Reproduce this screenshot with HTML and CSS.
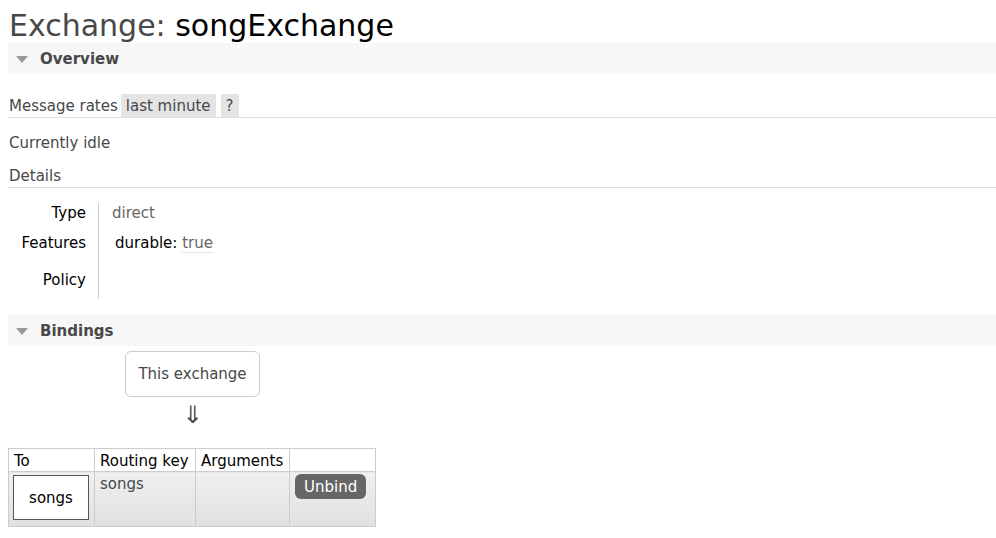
FILE: index.html
```html
<!DOCTYPE html>
<html>
<head>
<meta charset="utf-8">
<link rel="stylesheet" href="styles.css">
</head>
<body>
<h1 class="title">Exchange: <b class="name">songExchange</b></h1>

<div class="section">
  <h2 class="section-head"><span class="tri"></span>Overview</h2>
  <div class="rates">
    <span class="rates-label">Message rates</span>
    <span class="chip">last minute</span>
    <span class="chip help">?</span>
  </div>
  <p class="idle">Currently idle</p>
  <div class="subhead">Details</div>
  <div class="details">
    <div class="dl-key row1">Type</div>
    <div class="dl-val row1"><span class="grey">direct</span></div>
    <div class="dl-key row2">Features</div>
    <div class="dl-val row2 feat">durable: <abbr class="grey dotted">true</abbr></div>
    <div class="dl-key row3">Policy</div>
    <div class="dl-val row3"></div>
  </div>
</div>

<div class="section">
  <h2 class="section-head"><span class="tri"></span>Bindings</h2>
  <div class="flow">
    <div class="this-ex">This exchange</div>
    <div class="arrow">&#8659;</div>
  </div>
  <table class="bindings">
    <thead>
      <tr><th class="c1">To</th><th class="c2">Routing key</th><th class="c3">Arguments</th><th class="c4"></th></tr>
    </thead>
    <tbody>
      <tr>
        <td class="c1"><div class="queue">songs</div></td>
        <td class="c2 key">songs</td>
        <td class="c3"></td>
        <td class="c4"><span class="btn">Unbind</span></td>
      </tr>
    </tbody>
  </table>
</div>
</body>
</html>
```

FILE: styles.css
```css
html, body {
  margin: 0;
  padding: 0;
  background: #fff;
}
body {
  padding: 8px 0 0 8px;
  font-family: "DejaVu Sans", Verdana, sans-serif;
  font-size: 15px;
  color: #484848;
}
.title {
  margin: 0;
  font-size: 30px;
  font-weight: normal;
  line-height: 35px;
  color: #484848;
  padding-left: 1px;
}
.title .name {
  font-weight: normal;
  color: #000;
}
.section-head {
  margin: 0;
  height: 31px;
  background: #f7f7f7;
  display: flex;
  align-items: center;
  font-size: 15px;
  font-weight: bold;
  color: #484848;
}
.tri {
  width: 0;
  height: 0;
  border-left: 6px solid transparent;
  border-right: 6px solid transparent;
  border-top: 7px solid #999;
  margin: 1px 12px 0 8px;
}
.rates {
  margin-top: 20px;
  display: flex;
  align-items: stretch;
  border-bottom: 1px solid #ddd;
  height: 23px;
  line-height: 24px;
}
.rates-label {
  padding-left: 1px;
  margin-right: 3px;
}
.chip {
  background: #e4e4e4;
  padding: 0 5px;
  margin-right: 5px;
  color: #484848;
}
.chip.help {
  padding: 0 5px;
}
.idle {
  margin: 14px 0 0 1px;
  line-height: 22px;
}
.subhead {
  margin-top: 11px;
  padding-left: 1px;
  line-height: 22px;
  border-bottom: 1px solid #ddd;
}
.details {
  display: grid;
  grid-template-columns: 90px auto;
  grid-template-rows: 24px 31px 41px;
  margin-top: 15px;
  width: max-content;
}
.dl-key {
  text-align: right;
  padding-right: 12px;
  color: #000;
  line-height: 20px;
}
.dl-val {
  border-left: 1px solid #ccc;
  padding-left: 13px;
  line-height: 20px;
}
.row1 { padding-top: 0; }
.row2 { padding-top: 6px; }
.row3 { padding-top: 12px; }
.feat { color: #000; padding-left: 16px; }
.grey { color: #666; }
.dotted {
  text-decoration: none;
  border-bottom: 1px dotted #ccc;
}
.section + .section {
  margin-top: 16px;
}
.flow {
  display: flex;
  flex-direction: column;
  align-items: center;
  width: 368px;
}
.this-ex {
  margin-top: 5px;
  margin-left: 1px;
  border: 1px solid #ccc;
  border-radius: 6px;
  width: 133px;
  height: 44px;
  line-height: 44px;
  text-align: center;
  color: #484848;
}
.arrow {
  margin-top: 6px;
  font-size: 24px;
  line-height: 24px;
  color: #484848;
  margin-left: 1px;
}
.bindings {
  margin-top: 21px;
  border-collapse: collapse;
  font-size: 15px;
}
.bindings th, .bindings td {
  border: 1px solid #ccc;
  padding: 0;
}
.bindings th {
  font-weight: normal;
  text-align: left;
  color: #000;
  line-height: 20px;
  padding: 2px 5px 0 5px;
  background: #fff;
}
.bindings tbody tr {
  height: 55px;
}
.bindings tbody td {
  background: linear-gradient(#f0f0f0, #e0e0e0);
  vertical-align: top;
}
.bindings .c1 { width: 75px; }
.bindings .c2 { width: 90px; }
.bindings .c3 { width: 83px; }
.bindings .c4 { width: 72px; }
.bindings tbody .c1 { padding: 3px 5px 5px 4px; }
.queue {
  background: #fff;
  border: 1px solid #555;
  height: 43px;
  line-height: 45px;
  text-align: center;
  color: #000;
}
.key {
  padding: 2px 5px 0 5px !important;
  line-height: 20px;
  color: #484848;
}
.bindings tbody .c4 { padding: 2px 8px 0 5px; }
.btn {
  display: inline-block;
  background: #666;
  color: #fff;
  border-radius: 6px;
  padding: 0 9px;
  height: 25px;
  line-height: 26px;
}
```
